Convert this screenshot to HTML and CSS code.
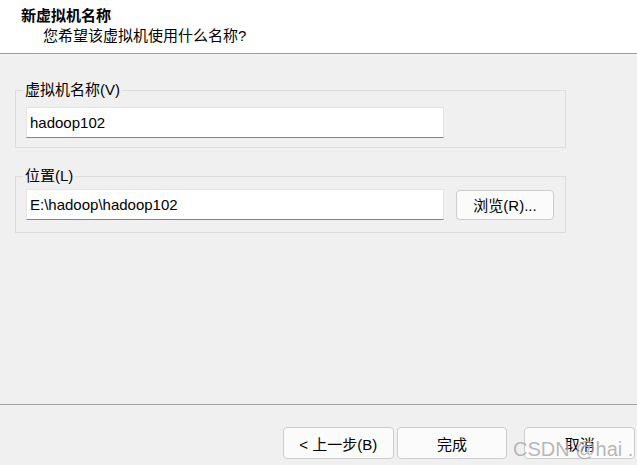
FILE: index.html
```html
<!DOCTYPE html>
<html lang="zh-CN">
<head>
    <meta charset="UTF-8">
    <meta name="viewport" content="width=device-width, initial-scale=1.0">
    <title>新建虚拟机向导</title>
    <link rel="stylesheet" href="styles.css">
</head>
<body>
    <div class="wizard">
        <div class="header">
            <div class="title">新虚拟机名称</div>
            <div class="subtitle">您希望该虚拟机使用什么名称?</div>
        </div>

        <div class="main">
            <fieldset class="group name-group">
                <legend>虚拟机名称(V)</legend>
                <div class="row">
                    <input class="field" type="text" value="hadoop102">
                </div>
            </fieldset>

            <fieldset class="group location-group">
                <legend>位置(L)</legend>
                <div class="row">
                    <input class="field" type="text" value="E:\hadoop\hadoop102">
                    <button class="btn browse">浏览(R)...</button>
                </div>
            </fieldset>
        </div>

        <div class="footer">
            <button class="btn nav">&lt; 上一步(B)</button>
            <button class="btn nav">完成</button>
            <button class="btn nav cancel">取消</button>
        </div>

        <div class="watermark">CSDN @hai .</div>
    </div>
</body>
</html>
```

FILE: styles.css
```css
body {
    margin: 0;
    font-family: "Liberation Sans", "Noto Sans CJK SC", sans-serif;
    font-size: 15px;
    color: #000;
    background-color: #f0f0f0;
}

.wizard {
    position: relative;
    width: 637px;
    height: 465px;
    display: flex;
    flex-direction: column;
    overflow: hidden;
}

.header {
    height: 47px;
    padding: 6px 0 0 21px;
    background: #fff;
    border-bottom: 1px solid #a0a0a0;
    line-height: 20px;
}

.title {
    font-weight: bold;
}

.subtitle {
    margin-left: 22px;
}

.main {
    flex: 1;
    padding: 26px 71px 0 15px;
}

.group {
    margin: 0;
    padding: 0 10px 9px;
    border: 1px solid #dcdcdc;
    min-width: 0;
}

.group legend {
    margin-left: -3px;
    padding: 0 2px;
    line-height: 20px;
}

.name-group .row {
    margin-top: 7px;
}

.location-group {
    margin-top: 18px;
    padding-bottom: 12px;
}

.location-group .row {
    margin-top: 3px;
}

.row {
    display: flex;
    align-items: center;
}

.field {
    box-sizing: border-box;
    width: 418px;
    height: 31px;
    margin: 0;
    padding: 0 3px;
    border: 1px solid #e3e3e3;
    border-bottom-color: #848484;
    background: #fff;
    font: inherit;
    color: #000;
    outline: none;
}

.btn {
    box-sizing: border-box;
    margin: 0;
    padding: 0;
    border: 1px solid #cccccc;
    border-radius: 4px;
    background: #fbfbfb;
    font: inherit;
    color: #000;
}

.browse {
    width: 98px;
    height: 30px;
    margin-left: 12px;
}

.footer {
    flex: none;
    height: 38px;
    border-top: 1px solid #a0a0a0;
    display: flex;
    align-items: flex-start;
    padding: 22px 2px 0 283px;
    gap: 3px;
}

.nav {
    width: 111px;
    height: 32px;
}

.cancel {
    margin-left: 14px;
}

/* watermark overlaid on the screenshot */
.watermark {
    position: absolute;
    left: 513px;
    top: 439px;
    line-height: 20px;
    font-family: "Liberation Sans", Arial, sans-serif;
    font-size: 20px;
    color: rgba(110, 110, 110, 0.5);
    text-shadow: 0 0 1px rgba(255, 255, 255, 0.8);
    white-space: nowrap;
    pointer-events: none;
}
```
